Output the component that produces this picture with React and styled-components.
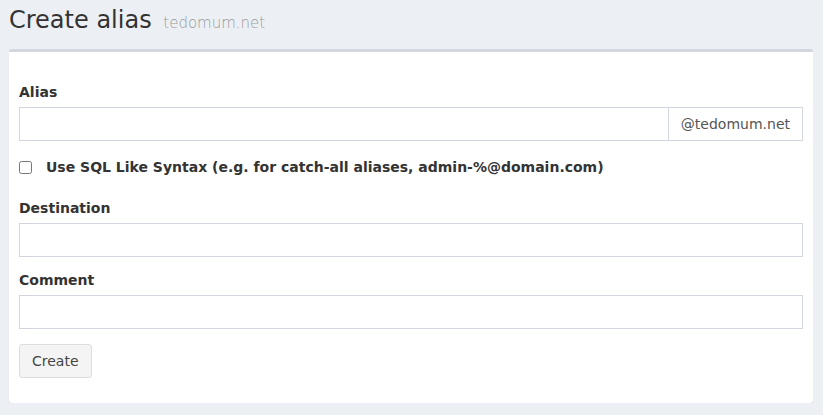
import React from 'react';
import styled, { createGlobalStyle } from 'styled-components';

const GlobalStyle = createGlobalStyle`
    * { box-sizing: border-box; }
    html, body {
        margin: 0;
        padding: 0;
        background: #ecf0f5;
        font-family: "DejaVu Sans", sans-serif;
        font-size: 14px;
        color: #333;
    }
`;

const Pagina = styled.div`
    padding: 0 10px 0 9px;
`;

const Encabezado = styled.div`
    padding: 7px 0 16px;
    h1 {
        margin: 0;
        height: 26px;
        font-size: 24px;
        font-weight: 400;
        line-height: 26px;
        color: #333;
        white-space: nowrap;
    }
    small {
        font-size: 15px;
        line-height: 1;
        color: #999;
        padding-left: 4px;
        font-weight: 300;
    }
`;

const Caja = styled.div`
    background: #fff;
    border-top: 3px solid #d2d6de;
    border-radius: 3px;
    box-shadow: 0 1px 1px rgba(0,0,0,0.1);
    padding: 30px 10px 25px;
`;

const Grupo = styled.div`
    display: flex;
    flex-direction: column;
    align-items: flex-start;
    margin-bottom: ${props => props.$abajo || 15}px;
`;

const Etiqueta = styled.label`
    font-weight: 700;
    font-size: 14px;
    line-height: 20px;
    margin-bottom: 5px;
    color: #333;
`;

const Campo = styled.input`
    display: block;
    width: 100%;
    height: 34px;
    flex: none;
    border: 1px solid #d2d6de;
    border-radius: 0;
    padding: 6px 12px;
    font-family: inherit;
    font-size: 14px;
    color: #555;
    outline: none;
`;

const GrupoInput = styled.div`
    display: flex;
    width: 100%;

    ${Campo} {
        flex: 1;
        width: auto;
        min-width: 0;
    }
`;

const Sufijo = styled.span`
    display: flex;
    align-items: center;
    height: 34px;
    padding: 6px 12px;
    border: 1px solid #d2d6de;
    border-left: 0;
    font-size: 14px;
    color: #555;
    background: #fff;
    white-space: nowrap;
`;

const FilaCheck = styled.label`
    display: flex;
    align-items: center;
    gap: 14px;
    height: 20px;
    margin-bottom: 21px;
    font-weight: 700;
    font-size: 14px;
    color: #333;

    input {
        width: 13px;
        height: 13px;
        margin: 0;
    }
`;

const Boton = styled.button`
    height: 34px;
    padding: 6px 12px;
    background: #f4f4f4;
    border: 1px solid #ddd;
    border-radius: 3px;
    font-family: inherit;
    font-size: 14px;
    color: #444;
`;

const App = () => {
    return (
        <>
        <GlobalStyle />
        <Pagina>
            <Encabezado>
                <h1>Create alias <small>tedomum.net</small></h1>
            </Encabezado>
            <Caja>
                <Grupo $abajo={16}>
                    <Etiqueta>Alias</Etiqueta>
                    <GrupoInput>
                        <Campo type="text" />
                        <Sufijo>@tedomum.net</Sufijo>
                    </GrupoInput>
                </Grupo>
                <FilaCheck>
                    <input type="checkbox" />
                    Use SQL Like Syntax (e.g. for catch-all aliases, admin-%@domain.com)
                </FilaCheck>
                <Grupo $abajo={13}>
                    <Etiqueta>Destination</Etiqueta>
                    <Campo type="text" />
                </Grupo>
                <Grupo $abajo={15}>
                    <Etiqueta>Comment</Etiqueta>
                    <Campo type="text" />
                </Grupo>
                <Boton>Create</Boton>
            </Caja>
        </Pagina>
        </>
    );
};

export default App;
